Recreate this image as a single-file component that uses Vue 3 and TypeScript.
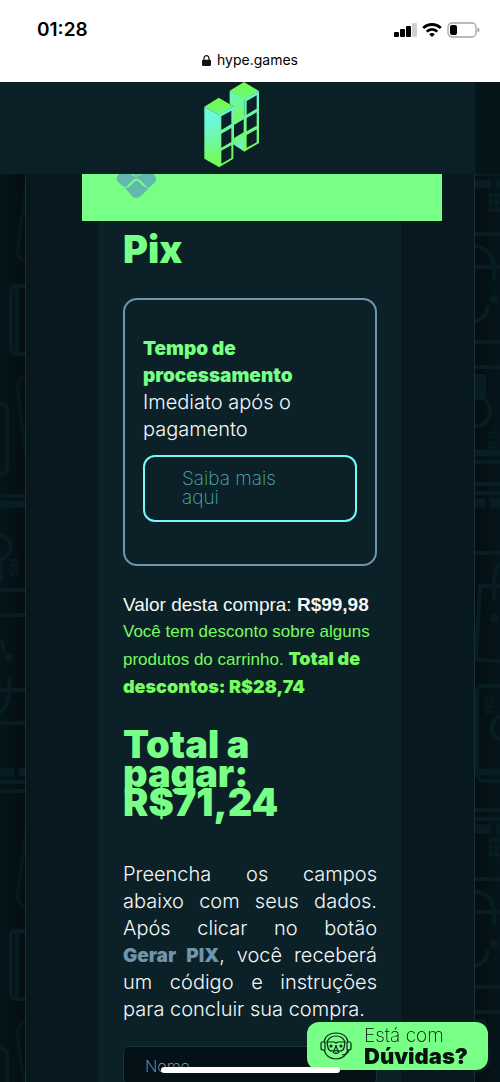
<script setup lang="ts">
import { ref } from 'vue'

const name = ref('')
const purchase = { value: 'R$99,98', discount: 'R$28,74', total: 'R$71,24' }
const signalBars = [5, 8, 11, 14]
const tiles = [-645, 0, 645]
</script>

<template>
  <div class="screen">
    <header class="browser">
      <div class="status">
        <time class="clock">01:28</time>
        <div class="indicators">
          <svg width="23" height="14" viewBox="0 0 23 14" aria-hidden="true">
            <rect v-for="(h, i) in signalBars" :key="h" :x="i * 6" :y="14 - h" width="5" :height="h" rx="1" :fill="i === 3 ? '#cfcfcf' : '#000'" />
          </svg>
          <svg width="20" height="14" viewBox="0 0 20 14" aria-hidden="true" fill="none" stroke="#000">
            <path d="M1.2 5.1a12.6 12.6 0 0 1 17.6 0" stroke-width="2.8" />
            <path d="M4.7 8.6a7.6 7.6 0 0 1 10.6 0" stroke-width="2.7" />
            <path d="M10 14L7.2 11.3a4 4 0 0 1 5.6 0Z" fill="#000" stroke="none" />
          </svg>
          <svg width="33" height="16" viewBox="0 0 33 16" aria-hidden="true">
            <rect x="1" y="1" width="28" height="14" rx="4" fill="#fff" stroke="#a5a5a5" stroke-width="1.3" />
            <rect x="3" y="3" width="7" height="10" rx="2" fill="#000" />
            <path d="M30.500 5.500q2 .7 2 2.500t-2 2.500z" fill="#999" />
          </svg>
        </div>
      </div>
      <div class="address">
        <svg width="9" height="11" viewBox="0 0 9 11" aria-hidden="true">
          <path d="M2 5V3.200a2.500 2.500 0 0 1 5 0V5" fill="none" stroke="#111" stroke-width="1.200" />
          <rect y="4.700" width="9" height="6.300" rx="1.300" fill="#111" />
        </svg>
        <span>hype.games</span>
      </div>
    </header>

    <nav class="brand">
      <a href="#" class="logo" aria-label="Hype Games">
        <svg width="57" height="87" viewBox="70 20 171 261" aria-hidden="true">
          <defs>
            <linearGradient id="side" x1="0" y1="0" x2="0" y2="1">
              <stop offset="0" stop-color="#6dfbd2" /><stop offset=".25" stop-color="#6cf7dc" /><stop offset="1" stop-color="#72fd4a" />
            </linearGradient>
            <linearGradient id="roof" x1="0" y1="0" x2="0" y2="1">
              <stop offset="0" stop-color="#70fb48" /><stop offset="1" stop-color="#6ffa82" />
            </linearGradient>
            <linearGradient id="back" x1="0" y1="0" x2="0" y2="1">
              <stop offset="0" stop-color="#68f6c8" /><stop offset="1" stop-color="#76fb49" />
            </linearGradient>
            <linearGradient id="front" x1="0" y1="0" x2="0" y2="1">
              <stop offset="0" stop-color="#67f3df" /><stop offset="1" stop-color="#75fd4d" />
            </linearGradient>
          </defs>
          <path d="M150 46L194 68V128L160 146V92L150 86Z" fill="url(#back)" />
          <path d="M193 20L238 47L194 73L150 46Z" fill="url(#roof)" />
          <path d="M158 205L195 178V229Z" fill="#6cf3b8" />
          <path d="M194 72L238 47V203L193 229V186L158 206V142L194 121Z" fill="url(#front)" />
          <path d="M74 94L119 119V276L74 250Z" fill="url(#side)" />
          <path d="M117 67L161 93L119 119L74 94Z" fill="url(#roof)" />
          <path d="M118 118L161 93V250L118 276Z" fill="url(#front)" />
          <g fill="#0c2027">
            <path d="M125 123L155 106V146L125 164ZM125 175L155 158V200L125 217ZM125 226L155 210V248L125 265Z" />
            <path d="M163 149L192 132V171L163 188ZM201 77L231 60V100L201 118ZM201 128L231 111V151L201 168ZM201 179L231 162V201L201 217Z" />
          </g>
        </svg>
      </a>
    </nav>

    <main class="stage">
      <svg class="pattern" aria-hidden="true">
        <g v-for="t in tiles" :key="t" :transform="`translate(0 ${t})`" fill="none" stroke="#081d23" stroke-width="4">
          <path d="M27 6L18 72Q16 84 25 88" stroke-opacity=".6" />
          <path d="M27 112H15Q11 112 11 117V174Q11 180 16 180H27M17 114V179" />
          <path d="M27 203Q16 204 18 218L26 283" stroke-opacity=".6" />
          <path d="M0 229Q7 229 7 236V294Q7 300 0 300M0 322H25M0 416H25M0 441H25M0 549H25" />
          <path d="M0 330H25" stroke-width="7" />
          <path d="M-1 361A12 12 0 0 1 -1 385M1 385V408M0 467Q4 469 3 478M0 516H25M9 504Q12 530 -2 540" />
          <circle cx="9" cy="483" r="4" fill="#081d23" stroke="none" />
          <path d="M0 598H14M19 598H25" stroke-width="9" />
          <path d="M0 608H25M0 617H25" />
        </g>
        <text transform="translate(9 384) rotate(90)" class="mark">RS</text>
      </svg>

      <div class="panel">
        <div class="pix-band">
          <svg width="42" height="25" viewBox="0 0 42 25" aria-hidden="true" fill="#61b8ac">
            <path d="M5 0H14L20 3L26 0H37Q43 4 38 9L34 13H31L24 6Q20 3 17 6L10 13H8L3 9Q-2 4 3 0Z" />
            <path d="M17 0L20 2L24 0Z" />
            <path d="M9 14Q13 14 15 11L19 7Q20 6 22 7L26 11Q29 14 33 14L25 22Q20 26 16 22Z" />
          </svg>
        </div>

        <section class="checkout">
          <h1>Pix</h1>
          <div class="card">
            <strong>Tempo de processamento</strong>
            <p>Imediato após o pagamento</p>
            <button type="button">Saiba mais aqui</button>
          </div>

          <p class="amount">Valor desta compra: <b>{{ purchase.value }}</b></p>
          <p class="discount">
            Você tem desconto sobre alguns produtos do carrinho.
            <strong>Total de descontos: {{ purchase.discount }}</strong>
          </p>
          <h2>Total a pagar: {{ purchase.total }}</h2>
          <p class="help">
            Preencha os campos abaixo com seus dados. Após clicar no botão
            <strong>Gerar PIX</strong>, você receberá um código e instruções para concluir sua compra.
          </p>
          <form @submit.prevent>
            <input v-model="name" type="text" placeholder="Nome" aria-label="Nome" />
          </form>
        </section>
      </div>

      <svg class="pattern" aria-hidden="true">
        <g v-for="t in tiles" :key="t" :transform="`translate(0 ${t})`" fill="none" stroke="#081d23" stroke-width="4">
          <path d="M0 60H25M0 93H25M0 168H25M0 193H25M0 288H25M0 310H25M0 319H25M0 379H25" />
          <path d="M0 10H16M21 10H25M0 329H10M15 329H25" stroke-width="9" />
          <path d="M27 21H15V36H27M15 28H27M21 21V36" stroke-width="3" />
          <path d="M0 72Q19 75 19 95V106M13 131Q12 144 0 147" />
          <circle cx="19" cy="125" r="4" fill="#081d23" stroke="none" />
          <path d="M0 200H11V226H0Z" fill="#081d23" stroke="none" />
          <path d="M10 225Q20 239 10 249Q6 252 0 252" />
          <path d="M0 279H25M0 598H25" stroke-width="7" />
          <path d="M27 412H5L1 484Q2 487 27 487M19 426V402Q20 392 27 388M27 512H6Q2 513 2 518V600Q3 607 9 607H27M0 636H25M0 645H25" />
          <circle cx="19" cy="444" r="4" fill="#081d23" stroke="none" />
          <circle cx="29" cy="554" r="12" />
        </g>
        <text transform="translate(22 275) rotate(-90)" class="mark">RS</text>
        <text transform="translate(19 540) rotate(-90)" class="mark">RS</text>
      </svg>
    </main>

    <button type="button" class="chat">
      <svg width="32" height="28" viewBox="0 0 32 28" aria-hidden="true" fill="none" stroke="#0b241b" stroke-width="1.200">
        <path d="M4 10C5 4 10 1 16 1s11 3 12 9M4 18c2 6 7 9 12 9s10-3 12-9" />
        <path d="M7 10C9 5 12 4 16 4s7 1 9 6" />
        <path d="M4 10H2Q1 10 1 12v4q0 2 2 2h2V10ZM28 10h2q1 0 1 2v4q0 2-2 2h-2V10Z" />
        <path d="M7 10h7l2 1 2-1h7l-1 6q-1 3-4 3-3 0-4-6-1 6-4 6-3 0-4-3Z" />
        <path d="M13 20q3-3 6 0-3 3-6 0M29 18q-2 5-7 5" />
        <circle cx="11" cy="14" r="1" fill="#0b241b" /><circle cx="21" cy="14" r="1" fill="#0b241b" />
      </svg>
      <span class="chat-text"><span>Está com</span><strong>Dúvidas?</strong></span>
    </button>
    <div class="home-indicator"></div>
  </div>
</template>

<style>
body { margin: 0; background: #05151a; }
</style>

<style scoped>
* { box-sizing: border-box; }
.screen {
  display: flex;
  flex-direction: column;
  height: 100vh;
  overflow: hidden;
  background: #05151a;
  color: #f4f7f7;
  font-family: Inter, "Liberation Sans", sans-serif;
}
h1, h2, p { margin: 0; }
.browser { flex: none; height: 82px; background: #fff; color: #000; }
.status { display: flex; justify-content: space-between; padding: 18px 20px 0 37px; height: 50px; }
.clock { font-size: 19px; line-height: 24px; font-weight: 600; }
.indicators { display: flex; align-items: center; gap: 5px; height: 24px; }
.address { display: flex; align-items: center; justify-content: center; gap: 6px; font-size: 14px; line-height: 20px; }
.brand {
  flex: none;
  display: flex;
  justify-content: center;
  height: 92px;
  margin-right: 25px;
  padding-right: 12px;
  background: #0b1f26;
}
.logo { height: 87px; }
.logo svg, .pix-band svg { display: block; }
.stage { flex: 1; min-height: 0; display: grid; grid-template-columns: 25px 1fr 25px; }
.pattern { width: 100%; height: 100%; background: linear-gradient(90deg, #04161b, #040e11); overflow: hidden; }
.pattern:last-child { background: linear-gradient(90deg, #040e11, #04161b); }
.mark { font: 700 13px "Liberation Sans", sans-serif; fill: #081d23; stroke: none; }
.panel { min-width: 0; overflow: hidden; background: #07191f; border: 1px solid #193038; border-width: 0 1px; }
.pix-band { height: 47px; margin: 0 32px 0 56px; padding-left: 34px; background: #78ff85; }
.checkout { margin: 0 73px 0 72px; padding: 0 24px 60px 25px; background: #0b2127; }
h1 { padding: 6px 0 8px; font-size: 38px; line-height: 44px; font-weight: 900; color: #78ff85; }
.card {
  margin-top: 19px;
  padding: 35px 18px 42px;
  border: 2px solid #7094ab;
  border-radius: 14px;
  font-size: 20px;
  line-height: 27px;
  font-weight: 300;
}
.card strong { display: block; font-size: 19px; font-weight: 900; color: #78ff85; }
.card button {
  display: block;
  width: 100%;
  margin-top: 12px;
  padding: 12px 64px 13px 37px;
  border: 2px solid #74f8fb;
  border-radius: 12px;
  background: transparent;
  color: #4daeb5;
  font: 200 19px/19px Inter, sans-serif;
  text-align: left;
}
.amount, .discount { font-family: "Liberation Sans", sans-serif; }
.amount { margin-top: 25px; font-size: 19px; line-height: 27px; white-space: nowrap; }
.discount { font-size: 17px; line-height: 28px; color: #76fc5e; }
.discount strong { font: 900 18px/20px Inter, sans-serif; }
h2 { margin-top: 28px; font-size: 38px; line-height: 29px; font-weight: 900; color: #78ff85; }
.help { margin-top: 44px; font-size: 20px; line-height: 27px; font-weight: 300; text-align: justify; }
.help strong { font-size: 19px; font-weight: 900; color: #7094ab; white-space: nowrap; }
form { margin-top: 23px; }
input {
  display: block;
  width: 100%;
  height: 39px;
  padding: 0 21px;
  border: 1px solid #14343d;
  border-radius: 6px;
  background: #041117;
  color: #fff;
  font: 200 16px/20px Inter, sans-serif;
}
input::placeholder { color: #9ca2a4; opacity: 1; }
.chat {
  position: fixed;
  right: 12px;
  bottom: 12px;
  display: flex;
  align-items: center;
  gap: 12px;
  width: 181px;
  height: 48px;
  padding: 0 12px 0 13px;
  border: 0;
  border-radius: 12px;
  background: #78ff85;
  color: #04110d;
  font-family: Inter, sans-serif;
  text-align: left;
}
.chat svg { flex: none; }
.chat-text { display: grid; font-size: 19px; line-height: 20px; font-weight: 200; }
.chat-text strong { font-size: 22px; font-weight: 900; }
.home-indicator {
  position: fixed;
  left: 50%;
  bottom: 9px;
  width: 179px;
  height: 6px;
  margin-left: -89px;
  border-radius: 3px;
  background: #fff;
}
</style>
